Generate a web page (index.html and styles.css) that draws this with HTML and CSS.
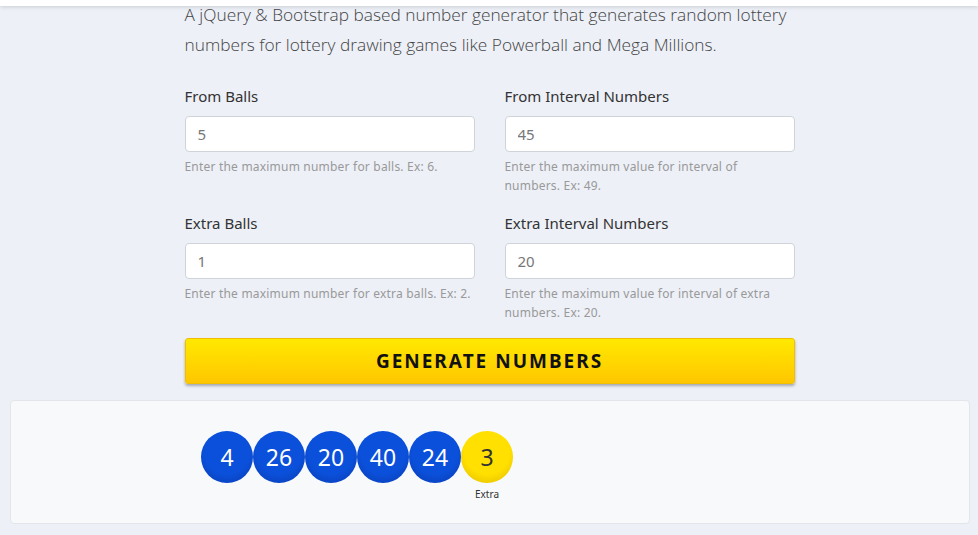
FILE: index.html
```html
<!DOCTYPE html>
<html lang="en">
<head>
  <meta charset="UTF-8" />
  <title>Lottery Number Generator</title>
  <link rel="stylesheet" href="styles.css">
</head>
<body>
  <div class="topbar"></div>

  <div class="container">
    <p class="lead">A jQuery &amp; Bootstrap based number generator that generates random lottery numbers for lottery drawing games like Powerball and Mega Millions.</p>

    <form class="grid">
      <div class="field">
        <label for="balls">From Balls</label>
        <input id="balls" type="text" value="5">
        <small>Enter the maximum number for balls. Ex: 6.</small>
      </div>
      <div class="field">
        <label for="interval">From Interval Numbers</label>
        <input id="interval" type="text" value="45">
        <small>Enter the maximum value for interval of numbers. Ex: 49.</small>
      </div>
      <div class="field">
        <label for="extra">Extra Balls</label>
        <input id="extra" type="text" value="1">
        <small>Enter the maximum number for extra balls. Ex: 2.</small>
      </div>
      <div class="field">
        <label for="extrainterval">Extra Interval Numbers</label>
        <input id="extrainterval" type="text" value="20">
        <small>Enter the maximum value for interval of extra numbers. Ex: 20.</small>
      </div>
      <button type="button" class="generate">GENERATE NUMBERS</button>
    </form>
  </div>

  <div class="results">
    <div class="balls">
      <div class="ball"><span>4</span></div>
      <div class="ball"><span>26</span></div>
      <div class="ball"><span>20</span></div>
      <div class="ball"><span>40</span></div>
      <div class="ball"><span>24</span></div>
      <div class="ball extra"><span>3</span><em>Extra</em></div>
    </div>
  </div>
</body>
</html>
```

FILE: styles.css
```css
body {
  margin: 0;
  background-color: #edf0f7;
  font-family: "Noto Sans", "Open Sans", sans-serif;
  color: #333;
}

.topbar {
  height: 6px;
  background: #fff;
  box-shadow: 0 1px 4px rgba(0, 0, 0, 0.15);
}

.container {
  width: 610px;
  margin: 0 auto;
  padding-left: 1px;
}

.lead {
  margin: -6px 0 0;
  font-family: "Open Sans", sans-serif;
  font-weight: 300;
  font-size: 17.3px;
  line-height: 30px;
  color: #444;
}

.grid {
  display: grid;
  grid-template-columns: 1fr 1fr;
  column-gap: 30px;
  margin-top: 25px;
}

.field {
  display: flex;
  flex-direction: column;
  height: 127px;
}

.field label {
  font-size: 15px;
  line-height: 22px;
  color: #333;
}

.field input {
  margin-top: 9px;
  height: 36px;
  box-sizing: border-box;
  padding: 0 12px;
  font-family: inherit;
  font-size: 15px;
  color: #777;
  background: #fff;
  border: 1px solid #ced4da;
  border-radius: 4px;
}

.field small {
  margin-top: 5px;
  font-size: 12px;
  line-height: 19px;
  letter-spacing: 0.2px;
  color: #999;
}

.generate {
  grid-column: 1 / 3;
  margin-top: -1px;
  height: 46px;
  font-family: inherit;
  font-size: 19px;
  font-weight: bold;
  letter-spacing: 2px;
  color: #111;
  background: linear-gradient(#ffe900, #ffc600);
  border: 1px solid #f0c000;
  border-radius: 3px;
  box-shadow: 0 2px 3px rgba(0, 0, 0, 0.3);
  cursor: pointer;
}

.results {
  margin: 16px 8px 0 10px;
  height: 122px;
  background: #f8f9fa;
  border: 1px solid #e2e5ea;
  border-radius: 4px;
}

.balls {
  width: 610px;
  margin: 30px auto 0;
  padding-left: 16px;
  box-sizing: border-box;
  display: flex;
}

.ball {
  position: relative;
  width: 52px;
  height: 52px;
  border-radius: 50%;
  background: radial-gradient(circle at 50% 40%, #0b50da 55%, #0839b0 100%);
  display: flex;
  align-items: center;
  justify-content: center;
  font-size: 23px;
  color: #fff;
}

.ball.extra {
  background: radial-gradient(circle at 50% 40%, #ffe000 55%, #e0b800 100%);
  color: #333;
}

.ball em {
  position: absolute;
  top: 56px;
  left: 0;
  right: 0;
  text-align: center;
  font-style: normal;
  font-size: 10px;
  color: #333;
}
```
